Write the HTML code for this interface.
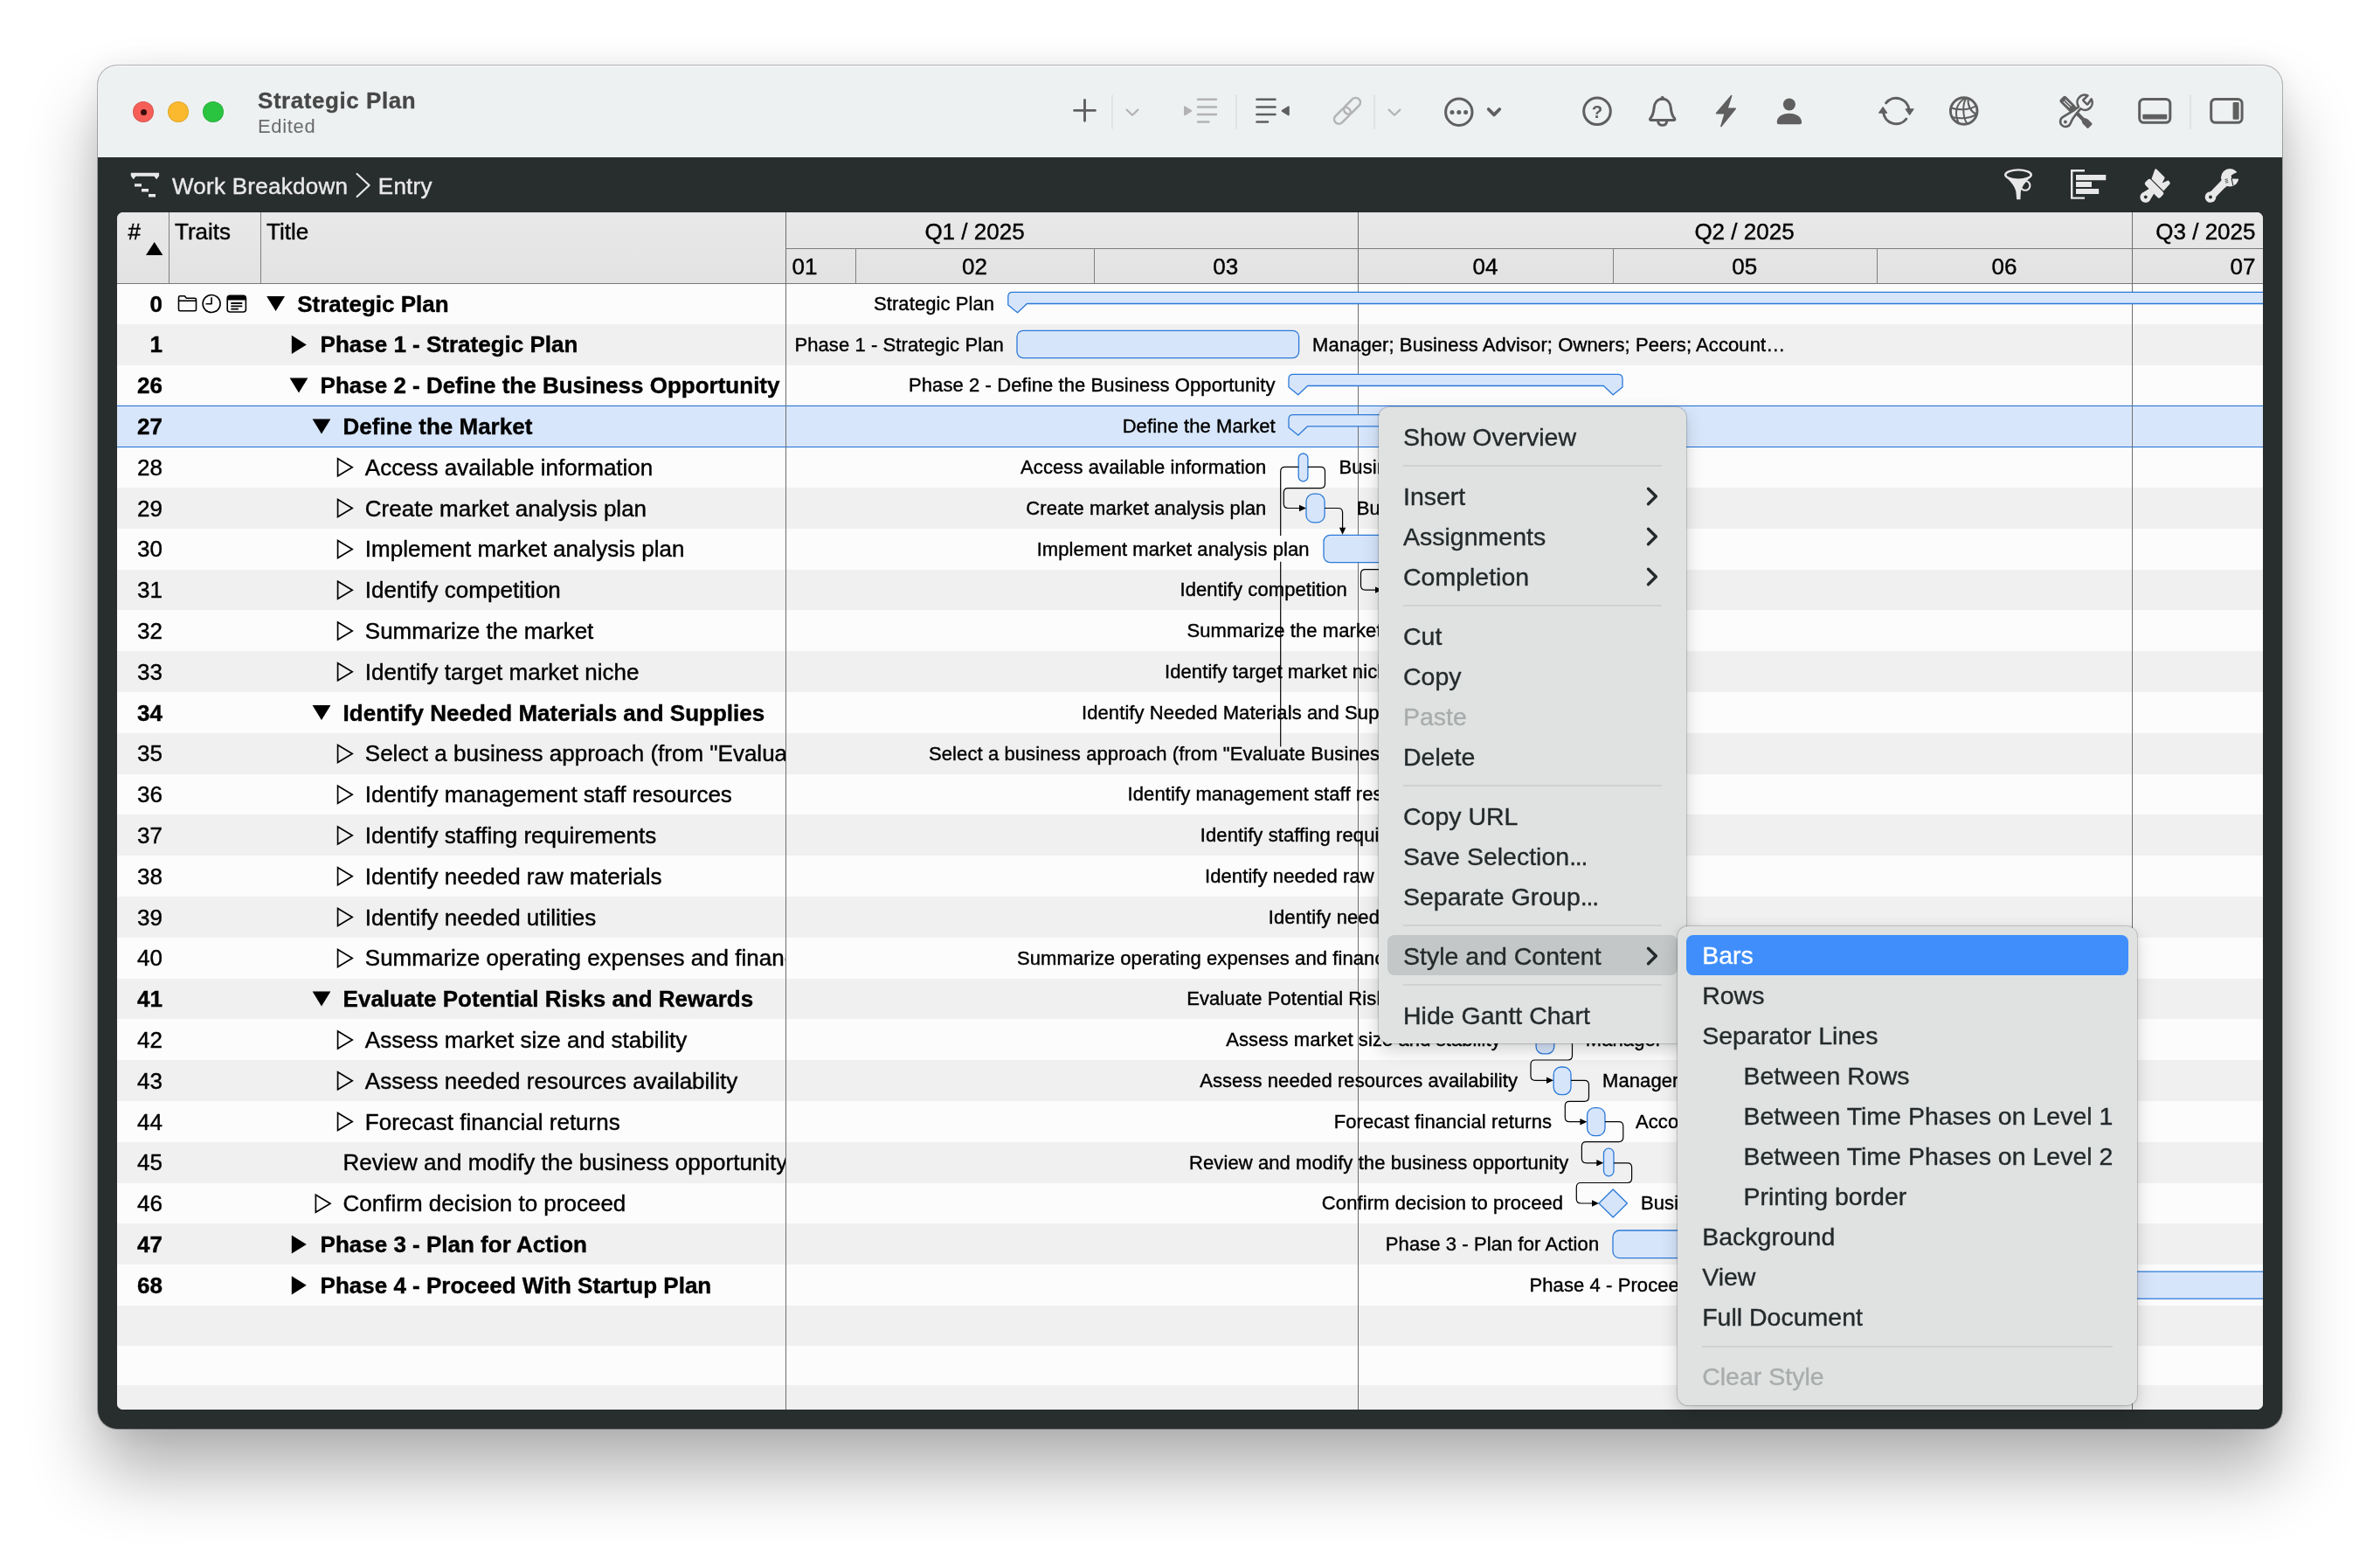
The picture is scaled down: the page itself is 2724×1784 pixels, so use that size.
<!DOCTYPE html><html><head><meta charset="utf-8"><title>Strategic Plan</title><style>
html,body{margin:0;padding:0;}
body{width:2724px;height:1784px;overflow:hidden;background:#fff;position:relative;
 font-family:"Liberation Sans",sans-serif;color:#000;-webkit-font-smoothing:antialiased;}
#root{position:absolute;left:0;top:0;width:2724px;height:1784px;will-change:transform;}
.abs{position:absolute;}
#win{position:absolute;left:112px;top:75px;width:2500px;height:1560px;border-radius:22px;background:#282d2e;
 box-shadow:0 0 0 1px rgba(0,0,0,.27),0 50px 80px rgba(0,0,0,.31),0 0 36px rgba(0,0,0,.075);}
#tbar{position:absolute;left:112px;top:75px;width:2500px;height:105px;background:#eef1f2;border-radius:22px 22px 0 0;
 box-shadow:inset 0 1px 0 rgba(255,255,255,.7);}
.tl{position:absolute;width:24px;height:24px;border-radius:50%;top:116px;box-shadow:inset 0 0 0 1px rgba(0,0,0,.10);}
#ttl{position:absolute;left:295px;top:100px;font-size:26px;font-weight:bold;color:#474747;letter-spacing:.55px;-webkit-text-stroke:.3px #474747;line-height:30px;white-space:nowrap;}
#sub{position:absolute;left:295px;top:131.8px;font-size:22px;color:#6b6b6b;letter-spacing:.65px;line-height:26px;white-space:nowrap;}
#crumb{position:absolute;left:197px;top:196.7px;-webkit-text-stroke:.4px #e9e9e9;font-size:26px;color:#e9e9e9;line-height:32px;white-space:nowrap;letter-spacing:.27px;}
#tab{position:absolute;left:134px;top:243px;width:2456px;height:1370px;border-radius:7px;overflow:hidden;background:#fcfcfc;}
#tin{position:absolute;left:-134px;top:-243px;width:2724px;height:1784px;}
.row{position:absolute;left:134px;width:2456px;}
.odd{background:#f0f0f0;}
.hd{position:absolute;left:134px;top:243px;width:2456px;height:81px;background:linear-gradient(#e9e9e9,#e2e2e2);}
.ht{position:absolute;font-size:26px;line-height:30px;white-space:nowrap;-webkit-text-stroke:.4px #000;}
.vl{position:absolute;width:1.3px;background:#6e6e6e;}
.hl{position:absolute;height:1.3px;background:#7c7c7c;}
.num{height:30px;line-height:30px;position:absolute;left:134px;width:52px;text-align:right;font-size:26px;white-space:nowrap;-webkit-text-stroke:.4px #000;}
.tt{height:30px;line-height:30px;position:absolute;font-size:26px;white-space:nowrap;-webkit-text-stroke:.4px #000;}
.b{font-weight:bold;}
#tcol{position:absolute;left:134px;top:324px;width:765px;height:1290px;overflow:hidden;}
#tcin{position:absolute;left:-134px;top:-324px;width:2724px;height:1784px;}
.gl{height:30px;line-height:30px;position:absolute;font-size:22px;white-space:nowrap;letter-spacing:.09px;-webkit-text-stroke:.4px #000;}
.menu{position:absolute;background:#dfe2e1;border-radius:12px;
 box-shadow:0 0 0 1px rgba(0,0,0,.15),0 7px 20px rgba(0,0,0,.17),0 0 5px rgba(0,0,0,.08);}
.mi{position:absolute;font-size:28.5px;letter-spacing:0;color:#242a2b;-webkit-text-stroke:.35px currentColor;white-space:nowrap;height:46px;line-height:46px;}
.dis{color:#a9acac;}
.sep{position:absolute;height:2px;background:#cfd2d1;}
svg{position:absolute;left:0;top:0;overflow:visible;}
</style></head><body>
<div id="root"><div id="win"></div><div id="tbar"></div>
<div class="tl" style="left:152px;background:#f55f58"></div>
<div class="abs" style="left:160.5px;top:124.5px;width:7px;height:7px;border-radius:50%;background:#3a0d0b"></div>
<div class="tl" style="left:192px;background:#fbb92f"></div>
<div class="tl" style="left:232px;background:#2bc440"></div>
<div id="ttl">Strategic Plan</div><div id="sub">Edited</div>
<div id="crumb">Work Breakdown<span style="display:inline-block;width:34.5px"></span>Entry</div>
<div id="tab"><div id="tin">
<div class="row odd" style="top:371px;height:47px"></div>
<div class="row odd" style="top:464px;height:47px"></div>
<div class="row odd" style="top:558px;height:47px"></div>
<div class="row odd" style="top:652px;height:46px"></div>
<div class="row odd" style="top:745px;height:47px"></div>
<div class="row odd" style="top:839px;height:47px"></div>
<div class="row odd" style="top:932px;height:47px"></div>
<div class="row odd" style="top:1026px;height:47px"></div>
<div class="row odd" style="top:1120px;height:46px"></div>
<div class="row odd" style="top:1213px;height:47px"></div>
<div class="row odd" style="top:1307px;height:47px"></div>
<div class="row odd" style="top:1400px;height:47px"></div>
<div class="row odd" style="top:1494px;height:46px"></div>
<div class="row odd" style="top:1585px;height:46px"></div>
<div class="row" style="top:464px;height:48px;background:#d8e6fb;border-top:1.6px solid #1f6fd3;border-bottom:1.6px solid #1f6fd3;box-sizing:border-box"></div>
<div class="hd"></div>
<div class="hl" style="left:134px;top:323.7px;width:2456px;background:#777"></div>
<div class="hl" style="left:899px;top:283.8px;width:1692px"></div>
<div class="vl" style="left:193px;top:243px;height:81px;background:#808080"></div>
<div class="vl" style="left:298px;top:243px;height:81px;background:#808080"></div>
<div class="vl" style="left:899px;top:243px;height:1371px"></div>
<div class="vl" style="left:1554px;top:243px;height:1371px"></div>
<div class="vl" style="left:2440px;top:243px;height:1371px"></div>
<div class="vl" style="left:978.5px;top:284px;height:40px;background:#808080"></div>
<div class="vl" style="left:1251.5px;top:284px;height:40px;background:#808080"></div>
<div class="vl" style="left:1845.7px;top:284px;height:40px;background:#808080"></div>
<div class="vl" style="left:2147.8px;top:284px;height:40px;background:#808080"></div>
<div class="ht" style="left:146.5px;top:250px">#</div>
<div class="ht" style="left:200px;top:250px">Traits</div>
<div class="ht" style="left:305px;top:250px">Title</div>
<div class="ht" style="left:965.5px;width:300px;text-align:center;top:249.5px">Q1 / 2025</div>
<div class="ht" style="left:1846.5px;width:300px;text-align:center;top:249.5px">Q2 / 2025</div>
<div class="ht" style="left:2281.5px;width:300px;text-align:right;top:249.5px">Q3 / 2025</div>
<div class="ht" style="left:906.5px;top:290px">01</div>
<div class="ht" style="left:965.5px;width:300px;text-align:center;top:290px">02</div>
<div class="ht" style="left:1252.7px;width:300px;text-align:center;top:290px">03</div>
<div class="ht" style="left:1550px;width:300px;text-align:center;top:290px">04</div>
<div class="ht" style="left:1846.8px;width:300px;text-align:center;top:290px">05</div>
<div class="ht" style="left:2144px;width:300px;text-align:center;top:290px">06</div>
<div class="ht" style="left:2281.5px;width:300px;text-align:right;top:290px">07</div>
<div id="tcol"><div id="tcin">
<div class="num b" style="top:333px">0</div>
<div class="tt b" style="left:340.2px;top:333px">Strategic Plan</div>
<div class="num b" style="top:379px">1</div>
<div class="tt b" style="left:366.6px;top:379px">Phase 1 - Strategic Plan</div>
<div class="num b" style="top:426px">26</div>
<div class="tt b" style="left:366.6px;top:426px">Phase 2 - Define the Business Opportunity</div>
<div class="num b" style="top:473px">27</div>
<div class="tt b" style="left:392.6px;top:473px">Define the Market</div>
<div class="num" style="top:520px">28</div>
<div class="tt" style="left:417.8px;top:520px">Access available information</div>
<div class="num" style="top:567px">29</div>
<div class="tt" style="left:417.8px;top:567px">Create market analysis plan</div>
<div class="num" style="top:613px">30</div>
<div class="tt" style="left:417.8px;top:613px">Implement market analysis plan</div>
<div class="num" style="top:660px">31</div>
<div class="tt" style="left:417.8px;top:660px">Identify competition</div>
<div class="num" style="top:707px">32</div>
<div class="tt" style="left:417.8px;top:707px">Summarize the market</div>
<div class="num" style="top:754px">33</div>
<div class="tt" style="left:417.8px;top:754px">Identify target market niche</div>
<div class="num b" style="top:801px">34</div>
<div class="tt b" style="left:392.6px;top:801px">Identify Needed Materials and Supplies</div>
<div class="num" style="top:847px">35</div>
<div class="tt" style="left:417.8px;top:847px">Select a business approach (from &quot;Evaluate Business Approach&quot; above)</div>
<div class="num" style="top:894px">36</div>
<div class="tt" style="left:417.8px;top:894px">Identify management staff resources</div>
<div class="num" style="top:941px">37</div>
<div class="tt" style="left:417.8px;top:941px">Identify staffing requirements</div>
<div class="num" style="top:988px">38</div>
<div class="tt" style="left:417.8px;top:988px">Identify needed raw materials</div>
<div class="num" style="top:1035px">39</div>
<div class="tt" style="left:417.8px;top:1035px">Identify needed utilities</div>
<div class="num" style="top:1081px">40</div>
<div class="tt" style="left:417.8px;top:1081px">Summarize operating expenses and financial projections</div>
<div class="num b" style="top:1128px">41</div>
<div class="tt b" style="left:392.6px;top:1128px">Evaluate Potential Risks and Rewards</div>
<div class="num" style="top:1175px">42</div>
<div class="tt" style="left:417.8px;top:1175px">Assess market size and stability</div>
<div class="num" style="top:1222px">43</div>
<div class="tt" style="left:417.8px;top:1222px">Assess needed resources availability</div>
<div class="num" style="top:1269px">44</div>
<div class="tt" style="left:417.8px;top:1269px">Forecast financial returns</div>
<div class="num" style="top:1315px">45</div>
<div class="tt" style="left:392.6px;top:1315px">Review and modify the business opportunity</div>
<div class="num" style="top:1362px">46</div>
<div class="tt" style="left:392.6px;top:1362px">Confirm decision to proceed</div>
<div class="num b" style="top:1409px">47</div>
<div class="tt b" style="left:366.6px;top:1409px">Phase 3 - Plan for Action</div>
<div class="num b" style="top:1456px">68</div>
<div class="tt b" style="left:366.6px;top:1456px">Phase 4 - Proceed With Startup Plan</div>
<svg width="2724" height="1784" viewBox="0 0 2724 1784"><path d="M305.2 339.0h20.8l-10.4 17z" fill="#000"/><path d="M333.8 383.8v21.2l17 -10.6z" fill="#000"/><path d="M331.6 432.6h20.8l-10.4 17z" fill="#000"/><path d="M357.6 479.4h20.8l-10.4 17z" fill="#000"/><path d="M386.6 524.8v20l16.6 -10z" fill="none" stroke="#000" stroke-width="1.7" stroke-linejoin="miter"/><path d="M386.6 571.6v20l16.6 -10z" fill="none" stroke="#000" stroke-width="1.7" stroke-linejoin="miter"/><path d="M386.6 618.4v20l16.6 -10z" fill="none" stroke="#000" stroke-width="1.7" stroke-linejoin="miter"/><path d="M386.6 665.2v20l16.6 -10z" fill="none" stroke="#000" stroke-width="1.7" stroke-linejoin="miter"/><path d="M386.6 712.0v20l16.6 -10z" fill="none" stroke="#000" stroke-width="1.7" stroke-linejoin="miter"/><path d="M386.6 758.8v20l16.6 -10z" fill="none" stroke="#000" stroke-width="1.7" stroke-linejoin="miter"/><path d="M357.6 807.0h20.8l-10.4 17z" fill="#000"/><path d="M386.6 852.4v20l16.6 -10z" fill="none" stroke="#000" stroke-width="1.7" stroke-linejoin="miter"/><path d="M386.6 899.2v20l16.6 -10z" fill="none" stroke="#000" stroke-width="1.7" stroke-linejoin="miter"/><path d="M386.6 946.0v20l16.6 -10z" fill="none" stroke="#000" stroke-width="1.7" stroke-linejoin="miter"/><path d="M386.6 992.8v20l16.6 -10z" fill="none" stroke="#000" stroke-width="1.7" stroke-linejoin="miter"/><path d="M386.6 1039.6v20l16.6 -10z" fill="none" stroke="#000" stroke-width="1.7" stroke-linejoin="miter"/><path d="M386.6 1086.4v20l16.6 -10z" fill="none" stroke="#000" stroke-width="1.7" stroke-linejoin="miter"/><path d="M357.6 1134.6h20.8l-10.4 17z" fill="#000"/><path d="M386.6 1180.0v20l16.6 -10z" fill="none" stroke="#000" stroke-width="1.7" stroke-linejoin="miter"/><path d="M386.6 1226.8v20l16.6 -10z" fill="none" stroke="#000" stroke-width="1.7" stroke-linejoin="miter"/><path d="M386.6 1273.6v20l16.6 -10z" fill="none" stroke="#000" stroke-width="1.7" stroke-linejoin="miter"/><path d="M361.4 1367.2v20l16.6 -10z" fill="none" stroke="#000" stroke-width="1.7" stroke-linejoin="miter"/><path d="M333.8 1413.4v21.2l17 -10.6z" fill="#000"/><path d="M333.8 1460.2v21.2l17 -10.6z" fill="#000"/><g fill="none" stroke="#000" stroke-width="1.6" stroke-linejoin="round">
<path d="M204.5 343v-2.6q0 -1.6 1.6 -1.6h5.2l2.2 2.4h9.4q1.6 0 1.6 1.6v11.4q0 1.6 -1.6 1.6h-16.8q-1.6 0 -1.6 -1.6z"/>
<path d="M204.5 344.2h20"/>
<circle cx="242.1" cy="347.5" r="10"/>
<path d="M242.1 340.2v7.6h-6.6"/>
<rect x="260.2" y="338.2" width="21.2" height="18.8" rx="3"/>
</g>
<path d="M260.2 343.4v-2.2q0 -3 3 -3h15.2q3 0 3 3v2.2z" fill="#000"/>
<path d="M264.3 347h13M264.3 350.4h13M264.3 353.7h8.6" stroke="#000" stroke-width="1.8"/></svg>
</div></div>
<svg width="2724" height="1784" viewBox="0 0 2724 1784"><path d="M167 292h19.4l-9.7 -15z" fill="#000"/></svg>
<div class="gl" style="right:1585.8px;top:333px">Strategic Plan</div>
<div class="gl" style="right:1575.2px;top:380px">Phase 1 - Strategic Plan</div>
<div class="gl" style="right:1264.5px;top:426px">Phase 2 - Define the Business Opportunity</div>
<div class="gl" style="right:1264.2px;top:473px">Define the Market</div>
<div class="gl" style="right:1274.6px;top:520px">Access available information</div>
<div class="gl" style="right:1274.6px;top:567px">Create market analysis plan</div>
<div class="gl" style="right:1225.3px;top:614px">Implement market analysis plan</div>
<div class="gl" style="right:1182.2px;top:660px">Identify competition</div>
<div class="gl" style="left:1358.5px;top:707px">Summarize the market</div>
<div class="gl" style="left:1333.0px;top:754px">Identify target market niche</div>
<div class="gl" style="left:1238px;top:801px">Identify Needed Materials and Supplies</div>
<div class="gl" style="left:1063px;top:848px">Select a business approach (from &quot;Evaluate Business Approach&quot; above)</div>
<div class="gl" style="left:1290.6px;top:894px">Identify management staff resources</div>
<div class="gl" style="left:1373.8px;top:941px">Identify staffing requirements</div>
<div class="gl" style="left:1379px;top:988px">Identify needed raw materials</div>
<div class="gl" style="left:1451.8px;top:1035px">Identify needed utilities</div>
<div class="gl" style="left:1164px;top:1082px">Summarize operating expenses and financial projections</div>
<div class="gl" style="left:1358.2px;top:1128px">Evaluate Potential Risks and Rewards</div>
<div class="gl" style="left:1403.2px;top:1175px">Assess market size and stability</div>
<div class="gl" style="right:986.9px;top:1222px">Assess needed resources availability</div>
<div class="gl" style="right:947.9px;top:1269px">Forecast financial returns</div>
<div class="gl" style="right:928.7px;top:1316px">Review and modify the business opportunity</div>
<div class="gl" style="right:934.8px;top:1362px">Confirm decision to proceed</div>
<div class="gl" style="right:893.8px;top:1409px">Phase 3 - Plan for Action</div>
<div class="gl" style="left:1750.5px;top:1456px">Phase 4 - Proceed With Startup Plan</div>
<div class="gl" style="left:1502px;top:380px">Manager; Business Advisor; Owners; Peers; Account…</div>
<div class="gl" style="left:1532.6px;top:520px">Business Advisor</div>
<div class="gl" style="left:1552.8px;top:567px">Business Advisor</div>
<div class="gl" style="left:1814.8px;top:1175px">Manager</div>
<div class="gl" style="left:1834px;top:1222px">Manager</div>
<div class="gl" style="left:1872px;top:1269px">Accountant</div>
<div class="gl" style="left:1878px;top:1362px">Business Advisor</div>
<svg width="2724" height="1784" viewBox="0 0 2724 1784"><path d="M1153.8 339.3Q1153.8 334.3 1158.8 334.3H2610V347.5H1175.3999999999999L1164.6 357.7L1153.8 349.0Z" fill="#d7e5fb" stroke="#2b7ad8" stroke-width="1.3" stroke-linejoin="round"/><rect x="1164" y="378.3" width="322.6" height="31.3" rx="7" fill="#d7e5fb" stroke="#2b7ad8" stroke-width="1.3"/><path d="M1475 433.3Q1475 428.3 1480 428.3H1852Q1857 428.3 1857 433.3V443.0L1846.2 451.7L1835.4 441.5H1496.6L1485.8 451.7L1475 443.0Z" fill="#d7e5fb" stroke="#2b7ad8" stroke-width="1.3" stroke-linejoin="round"/><path d="M1475 479.6Q1475 474.6 1480 474.6H1795Q1800 474.6 1800 479.6V489.3L1789.2 498.0L1778.4 487.8H1496.6L1485.8 498.0L1475 489.3Z" fill="#d7e5fb" stroke="#2b7ad8" stroke-width="1.3" stroke-linejoin="round"/><rect x="1486.2" y="519" width="10.7" height="31.9" rx="5.35" fill="#d7e5fb" stroke="#2b7ad8" stroke-width="1.3"/><rect x="1495" y="565.2" width="21.1" height="32.7" rx="8.5" fill="#d7e5fb" stroke="#2b7ad8" stroke-width="1.3"/><rect x="1515" y="612.3" width="185.0" height="31.4" rx="7.5" fill="#d7e5fb" stroke="#2b7ad8" stroke-width="1.3"/><rect x="1758.1" y="1174.3" width="20.7" height="31.5" rx="8" fill="#d7e5fb" stroke="#2b7ad8" stroke-width="1.3"/><rect x="1778.2" y="1221" width="19.8" height="31.7" rx="8.5" fill="#d7e5fb" stroke="#2b7ad8" stroke-width="1.3"/><rect x="1816.6" y="1267.6" width="20.4" height="32.0" rx="8.5" fill="#d7e5fb" stroke="#2b7ad8" stroke-width="1.3"/><rect x="1835.5" y="1314.2" width="11.5" height="31.6" rx="5.7" fill="#d7e5fb" stroke="#2b7ad8" stroke-width="1.3"/><rect x="1846" y="1408" width="254.0" height="31.6" rx="7.5" fill="#d7e5fb" stroke="#2b7ad8" stroke-width="1.3"/><rect x="2300" y="1455.2" width="320.0" height="31.0" rx="7" fill="#d7e5fb" stroke="#2b7ad8" stroke-width="1.3"/><path d="M1830 1377L1846.2 1361L1862.4 1377L1846.2 1393Z" fill="#d7e5fb" stroke="#2b7ad8" stroke-width="1.3" stroke-linejoin="round"/><path d="M1486.2 534.4L1470.7 534.4Q1465.7 534.4 1465.7 539.4L1465.7 613" fill="none" stroke="#000" stroke-width="1.2"/><path d="M1465.7 642.7L1465.7 854.4" fill="none" stroke="#000" stroke-width="1.2"/><path d="M1496.9 534.4L1511.5 534.4Q1516.5 534.4 1516.5 539.4L1516.5 553.6Q1516.5 558.6 1511.5 558.6L1474.3 558.6Q1469.3 558.6 1469.3 563.6L1469.3 576.5Q1469.3 581.5 1474.3 581.5L1488 581.5" fill="none" stroke="#000" stroke-width="1.2"/><path d="M1495 581.5l-8 -3.7v7.4z" fill="#000"/><path d="M1516.1 581.5L1531.6 581.5Q1536.6 581.5 1536.6 586.5L1536.6 604" fill="none" stroke="#000" stroke-width="1.2"/><path d="M1536.6 611.8l-3.7 -8h7.4z" fill="#000"/><path d="M1600 651.6L1562.5 651.6Q1557.5 651.6 1557.5 656.6L1557.5 670.1Q1557.5 675.1 1562.5 675.1L1575 675.1" fill="none" stroke="#000" stroke-width="1.2"/><path d="M1582 675.1l-8 -3.7v7.4z" fill="#000"/><path d="M1778.8 1190L1794.5 1190.0Q1799.5 1190 1799.5 1195.0L1799.5 1208.0Q1799.5 1213 1794.5 1213.0L1757.0 1213.0Q1752 1213 1752.0 1218.0L1752.0 1231.3Q1752 1236.3 1757.0 1236.3L1771 1236.3" fill="none" stroke="#000" stroke-width="1.2"/><path d="M1778 1236.3l-8 -3.7v7.4z" fill="#000"/><path d="M1798 1236.3L1813.5 1236.3Q1818.5 1236.3 1818.5 1241.3L1818.5 1255.3Q1818.5 1260.3 1813.5 1260.3L1796.3 1260.3Q1791.3 1260.3 1791.3 1265.3L1791.3 1278.7Q1791.3 1283.7 1796.3 1283.7L1809 1283.7" fill="none" stroke="#000" stroke-width="1.2"/><path d="M1816.4 1283.7l-8 -3.7v7.4z" fill="#000"/><path d="M1837 1283.7L1852.8 1283.7Q1857.8 1283.7 1857.8 1288.7L1857.8 1301.6Q1857.8 1306.6 1852.8 1306.6L1815.4 1306.6Q1810.4 1306.6 1810.4 1311.6L1810.4 1325.8Q1810.4 1330.8 1815.4 1330.8L1828 1330.8" fill="none" stroke="#000" stroke-width="1.2"/><path d="M1835.3 1330.8l-8 -3.7v7.4z" fill="#000"/><path d="M1847 1330.8L1862.6 1330.8Q1867.6 1330.8 1867.6 1335.8L1867.6 1348.5Q1867.6 1353.5 1862.6 1353.5L1809.3 1353.5Q1804.3 1353.5 1804.3 1358.5L1804.3 1372.0Q1804.3 1377 1809.3 1377.0L1823 1377" fill="none" stroke="#000" stroke-width="1.2"/><path d="M1830 1377l-8 -3.7v7.4z" fill="#000"/></svg>
</div></div>
<svg width="2724" height="1784" viewBox="0 0 2724 1784"><path d="M1229.6 126.4h23.8M1241.5 114.5v23.8" stroke="#5f5f5f" stroke-width="2.9" stroke-linecap="round"/><path d="M1273 108.4V147.7" stroke="#dcdfe0" stroke-width="1.6"/><path d="M1415 108.4V147.7" stroke="#dcdfe0" stroke-width="1.6"/><path d="M1573 108.4V147.7" stroke="#dcdfe0" stroke-width="1.6"/><path d="M2507 108.4V147.7" stroke="#dcdfe0" stroke-width="1.6"/><path d="M1289.6 125.6L1296 131.7L1302.4 125.6" fill="none" stroke="#b3b3b3" stroke-width="2.2" stroke-linecap="round" stroke-linejoin="round"/><path d="M1589.6 125.6L1596 131.7L1602.4 125.6" fill="none" stroke="#b3b3b3" stroke-width="2.2" stroke-linecap="round" stroke-linejoin="round"/><path d="M1703.7 125L1710 131.3L1716.3 125" fill="none" stroke="#5f5f5f" stroke-width="3.8" stroke-linecap="round" stroke-linejoin="round"/><path d="M1371 113.8h21M1371 122.5h21M1371 131h21M1371 139.5h12.5" stroke="#b3b3b3" stroke-width="2.4" stroke-linecap="round"/><path d="M1356 122.3v9l7.2 -4.5z" fill="#b3b3b3" stroke="#b3b3b3" stroke-width="2" stroke-linejoin="round"/><path d="M1438.5 113.8h21M1438.5 122.5h21M1438.5 131h21M1438.5 139.5h12.5" stroke="#5f5f5f" stroke-width="2.6" stroke-linecap="round"/><path d="M1474.8 122.3v9l-7.2 -4.5z" fill="#5f5f5f" stroke="#5f5f5f" stroke-width="2" stroke-linejoin="round"/><g fill="none" stroke="#b3b3b3" stroke-width="2.5" transform="translate(1542 126.8) rotate(-45)"><rect x="-18.9" y="-5.3" width="22" height="10.6" rx="5.3"/><rect x="-3.1" y="-5.3" width="22" height="10.6" rx="5.3"/></g><circle cx="1669.8" cy="128.2" r="15.2" fill="none" stroke="#5f5f5f" stroke-width="3"/><circle cx="1662.0" cy="128.4" r="2.5" fill="#5f5f5f"/><circle cx="1669.8" cy="128.4" r="2.5" fill="#5f5f5f"/><circle cx="1677.6" cy="128.4" r="2.5" fill="#5f5f5f"/><circle cx="1828" cy="127.3" r="15.3" fill="none" stroke="#5f5f5f" stroke-width="3"/><text x="1828" y="134.6" text-anchor="middle" font-family="Liberation Sans, sans-serif" font-weight="bold" font-size="20.5" fill="#5f5f5f">?</text><g fill="none" stroke="#5f5f5f" stroke-width="3" stroke-linejoin="round" stroke-linecap="round"><path d="M1889.6 137.5H1915.8Q1917.6 137.3 1916.6 135.6C1913 131.5 1912.8 128 1912.3 123.5C1911.8 117.5 1908.5 113.3 1902.7 113.3C1896.9 113.3 1893.6 117.5 1893.1 123.5C1892.6 128 1892.4 131.5 1888.8 135.6Q1887.8 137.3 1889.6 137.5Z"/><path d="M1897.7 139.2A5.1 5.1 0 0 0 1907.7 139.2"/></g><circle cx="1902.7" cy="112.2" r="2.3" fill="#5f5f5f"/><path d="M1981.7 109.5L1964.6 129.6H1974.4L1969.9 144.5L1986.3 124.3H1976.9Z" fill="#5f5f5f" stroke="#5f5f5f" stroke-width="1.6" stroke-linejoin="round"/><circle cx="2047.9" cy="119.5" r="7" fill="#5f5f5f"/><path d="M2036 142.2h23.8q2.3 0 2.3 -2.2c0 -6 -6 -10.2 -14.2 -10.2s-14.2 4.2 -14.2 10.2q0 2.2 2.3 2.2z" fill="#5f5f5f"/><path d="M2158.6 117.9A14.7 14.7 0 0 1 2184.8 125.5M2181.8 136.1A14.7 14.7 0 0 1 2155.6 128.5" fill="none" stroke="#5f5f5f" stroke-width="3" stroke-linecap="round"/><path d="M2180.9 124.8h9.4l-4.7 6.8z" fill="#5f5f5f" stroke="#5f5f5f" stroke-width="1" stroke-linejoin="round"/><path d="M2150.4 129.2h9.4l-4.7 -6.8z" fill="#5f5f5f" stroke="#5f5f5f" stroke-width="1" stroke-linejoin="round"/><g fill="none" stroke="#5f5f5f"><circle cx="2247.7" cy="127" r="15.3" stroke-width="2.9"/><g stroke-width="2"><path d="M2250.5 112.3C2246 118 2246 134 2251.5 141.6"/><path d="M2249 112.3C2238 119 2237 130 2241.5 140.5"/><path d="M2252.5 112.5C2252 122 2256 128 2262.5 131"/><path d="M2233.3 123.5C2242 126.5 2254 126 2262 121"/><path d="M2234.5 134C2243 136.5 2254 135.5 2261.5 131.5"/></g></g><g transform="translate(2366.7 119.1) rotate(45)"><rect x="-9.8" y="-4.75" width="19.6" height="9.5" rx="2.4" fill="#5f5f5f"/><path d="M-5.6 -1.4H4.4M-5.6 1.35H4.4" stroke="#eef1f2" stroke-width="1.05" fill="none"/><rect x="9" y="-2.1" width="18" height="4.2" fill="#5f5f5f"/><path d="M24.6 -2.1L27 -3.6Q28 -3.9 29 -3.9H35Q36.2 -3.9 36.2 -2.7V2.7Q36.2 3.9 35 3.9H29Q28 3.9 27 3.6L24.6 2.1Z" fill="#5f5f5f"/></g><path d="M2393.7 113.3A8.5 8.5 0 0 1 2381.3 124.3Q2376.5 129.8 2372.7 135.2Q2371 138.4 2369.7 141.2A6 6 0 1 1 2361.5 133.6Q2367.7 129.8 2373.1 126.6L2379.1 122.1A8.5 8.5 0 0 1 2389.5 109.4L2384.5 114.2Q2384 114.8 2384.6 115.4L2388.4 119.2Q2389 119.8 2389.6 119.2Z" fill="#eef1f2" stroke="#5f5f5f" stroke-width="2.6" stroke-linejoin="round"/><circle cx="2363.9" cy="139.5" r="1.9" fill="#5f5f5f"/><rect x="2448.7" y="113.4" width="35.1" height="26.9" rx="5" fill="none" stroke="#5f5f5f" stroke-width="3"/><rect x="2452.3" y="130.8" width="28" height="5.8" rx="1" fill="#5f5f5f"/><rect x="2530.7" y="113.4" width="35.4" height="26.9" rx="5" fill="none" stroke="#5f5f5f" stroke-width="3"/><rect x="2555.6" y="117" width="7" height="19.7" rx="1" fill="#5f5f5f"/><path d="M149.8 197.7H182.1V201.2L179.2 205.2L176.4 201.8H155.5L152.7 205.2L149.8 201.2Z" fill="#e8e8e8"/><path d="M154 210.2h8v3.3h-8zM162 216.1h8v3.4h-8zM170 222h8v3.4h-8z" fill="#e8e8e8"/><path d="M408.6 199L422.6 212L408.6 225" fill="none" stroke="#e8e8e8" stroke-width="2.2" stroke-linecap="round" stroke-linejoin="round"/><ellipse cx="2310" cy="200" rx="14.8" ry="5.6" fill="none" stroke="#e8e8e8" stroke-width="2.4"/><path d="M2295.6 202.5Q2305.8 211.5 2307.3 219L2308.2 228.3H2312.4L2312.9 219Q2314.2 211.5 2324.4 202.5Q2310 209.5 2295.6 202.5Z" fill="#e8e8e8"/><circle cx="2318" cy="212.4" r="5.4" fill="none" stroke="#e8e8e8" stroke-width="2.1"/><path d="M2386 195.3H2371.2V226.6H2386" fill="none" stroke="#e8e8e8" stroke-width="2.4"/><path d="M2376 200h34.3v6.2h-34.3zM2376 208.1h18v6h-18zM2376 216.1h26.2v6h-26.2z" fill="#e8e8e8"/><g transform="translate(2465.6 215.7) rotate(45)" fill="#e8e8e8"><path d="M-10 -5.6L-14.6 -15.2Q-15.6 -17.6 -13.2 -17.6L-1.2 -17.6Q0 -17.6 0.3 -16.2L2.1 -10.8L4.2 -17Q4.6 -18.2 5.8 -18L8 -17.5Q9 -17.2 9 -16L9.5 -5.6Z"/><rect x="-12.3" y="-4.4" width="24.6" height="8.9" rx="2.6"/><path d="M-3.8 4H3.8L5.6 11.4A6.2 6.2 0 1 1 -5.6 11.4Z"/><circle cx="0" cy="13.9" r="1.9" fill="#282d2e"/></g><path d="M2530 225.5L2547 208" stroke="#e8e8e8" stroke-width="8.6" stroke-linecap="round" fill="none"/><circle cx="2530" cy="225.5" r="6.3" fill="#e8e8e8"/><circle cx="2530" cy="225.5" r="1.9" fill="#282d2e"/><circle cx="2552.2" cy="203.3" r="10.2" fill="#e8e8e8"/><path d="M2543.2 206.5Q2545.5 211 2541 215.5L2548.5 214Z" fill="#e8e8e8"/><path d="M2560.6 197L2565 199V204.7L2554.2 204.5L2553.7 200.8Q2556.5 198.4 2560.6 197Z" fill="#282d2e"/><path d="M2554 203.8L2555.9 212.6" stroke="#282d2e" stroke-width="1.1" fill="none"/><path d="M2546.4 205.6l3.2 -0.9M2546.8 207.4l3.2 -0.9M2547.2 209.2l3.2 -0.9" stroke="#282d2e" stroke-width=".8" fill="none"/></svg>
<div class="menu" style="left:1578px;top:466px;width:351.8px;height:727.6px">
<div class="abs" style="left:10px;top:604px;width:332px;height:46px;border-radius:8px;background:#c4c7c7"></div>
<div class="mi" style="left:28px;top:11px;">Show Overview</div>
<div class="sep" style="left:28px;top:66px;width:295.8px"></div>
<div class="mi" style="left:28px;top:79px;">Insert</div>
<svg width="20" height="30" viewBox="0 0 20 30" style="left:304.29999999999995px;top:87px"><path d="M4.5 6.2L13.4 15L4.5 23.8" fill="none" stroke="#242a2b" stroke-width="3.4" stroke-linecap="round" stroke-linejoin="round"/></svg>
<div class="mi" style="left:28px;top:125px;">Assignments</div>
<svg width="20" height="30" viewBox="0 0 20 30" style="left:304.29999999999995px;top:133px"><path d="M4.5 6.2L13.4 15L4.5 23.8" fill="none" stroke="#242a2b" stroke-width="3.4" stroke-linecap="round" stroke-linejoin="round"/></svg>
<div class="mi" style="left:28px;top:171px;">Completion</div>
<svg width="20" height="30" viewBox="0 0 20 30" style="left:304.29999999999995px;top:179px"><path d="M4.5 6.2L13.4 15L4.5 23.8" fill="none" stroke="#242a2b" stroke-width="3.4" stroke-linecap="round" stroke-linejoin="round"/></svg>
<div class="sep" style="left:28px;top:225.60000000000002px;width:295.8px"></div>
<div class="mi" style="left:28px;top:239px;">Cut</div>
<div class="mi" style="left:28px;top:285px;">Copy</div>
<div class="mi dis" style="left:28px;top:331px;">Paste</div>
<div class="mi" style="left:28px;top:377px;">Delete</div>
<div class="sep" style="left:28px;top:432px;width:295.8px"></div>
<div class="mi" style="left:28px;top:445px;">Copy URL</div>
<div class="mi" style="left:28px;top:491px;">Save Selection<span style="letter-spacing:-1.2px">...</span></div>
<div class="mi" style="left:28px;top:537px;">Separate Group<span style="letter-spacing:-1.2px">...</span></div>
<div class="sep" style="left:28px;top:592px;width:295.8px"></div>
<div class="mi" style="left:28px;top:605px;">Style and Content</div>
<svg width="20" height="30" viewBox="0 0 20 30" style="left:304.29999999999995px;top:613px"><path d="M4.5 6.2L13.4 15L4.5 23.8" fill="none" stroke="#242a2b" stroke-width="3.4" stroke-linecap="round" stroke-linejoin="round"/></svg>
<div class="sep" style="left:28px;top:659.8px;width:295.8px"></div>
<div class="mi" style="left:28px;top:673px;">Hide Gantt Chart</div>
</div>
<div class="menu" style="left:1920.2px;top:1059.8px;width:526px;height:548.2px">
<div class="abs" style="left:9.799999999999955px;top:10.200000000000045px;width:506px;height:46px;border-radius:8px;background:#3f8efb"></div>
<div class="mi" style="left:28.0px;top:10.200000000000045px;color:#fff;">Bars</div>
<div class="mi" style="left:28.0px;top:56.200000000000045px;">Rows</div>
<div class="mi" style="left:28.0px;top:102.20000000000005px;">Separator Lines</div>
<div class="mi" style="left:75.20000000000005px;top:148.20000000000005px;">Between Rows</div>
<div class="mi" style="left:75.20000000000005px;top:194.20000000000005px;">Between Time Phases on Level 1</div>
<div class="mi" style="left:75.20000000000005px;top:240.20000000000005px;">Between Time Phases on Level 2</div>
<div class="mi" style="left:75.20000000000005px;top:286.20000000000005px;">Printing border</div>
<div class="mi" style="left:28.0px;top:332.20000000000005px;">Background</div>
<div class="mi" style="left:28.0px;top:378.20000000000005px;">View</div>
<div class="mi" style="left:28.0px;top:424.20000000000005px;">Full Document</div>
<div class="sep" style="left:28.0px;top:479.79999999999995px;width:470.0px"></div>
<div class="mi dis" style="left:28.0px;top:492.20000000000005px;">Clear Style</div>
</div>
</div></body></html>
